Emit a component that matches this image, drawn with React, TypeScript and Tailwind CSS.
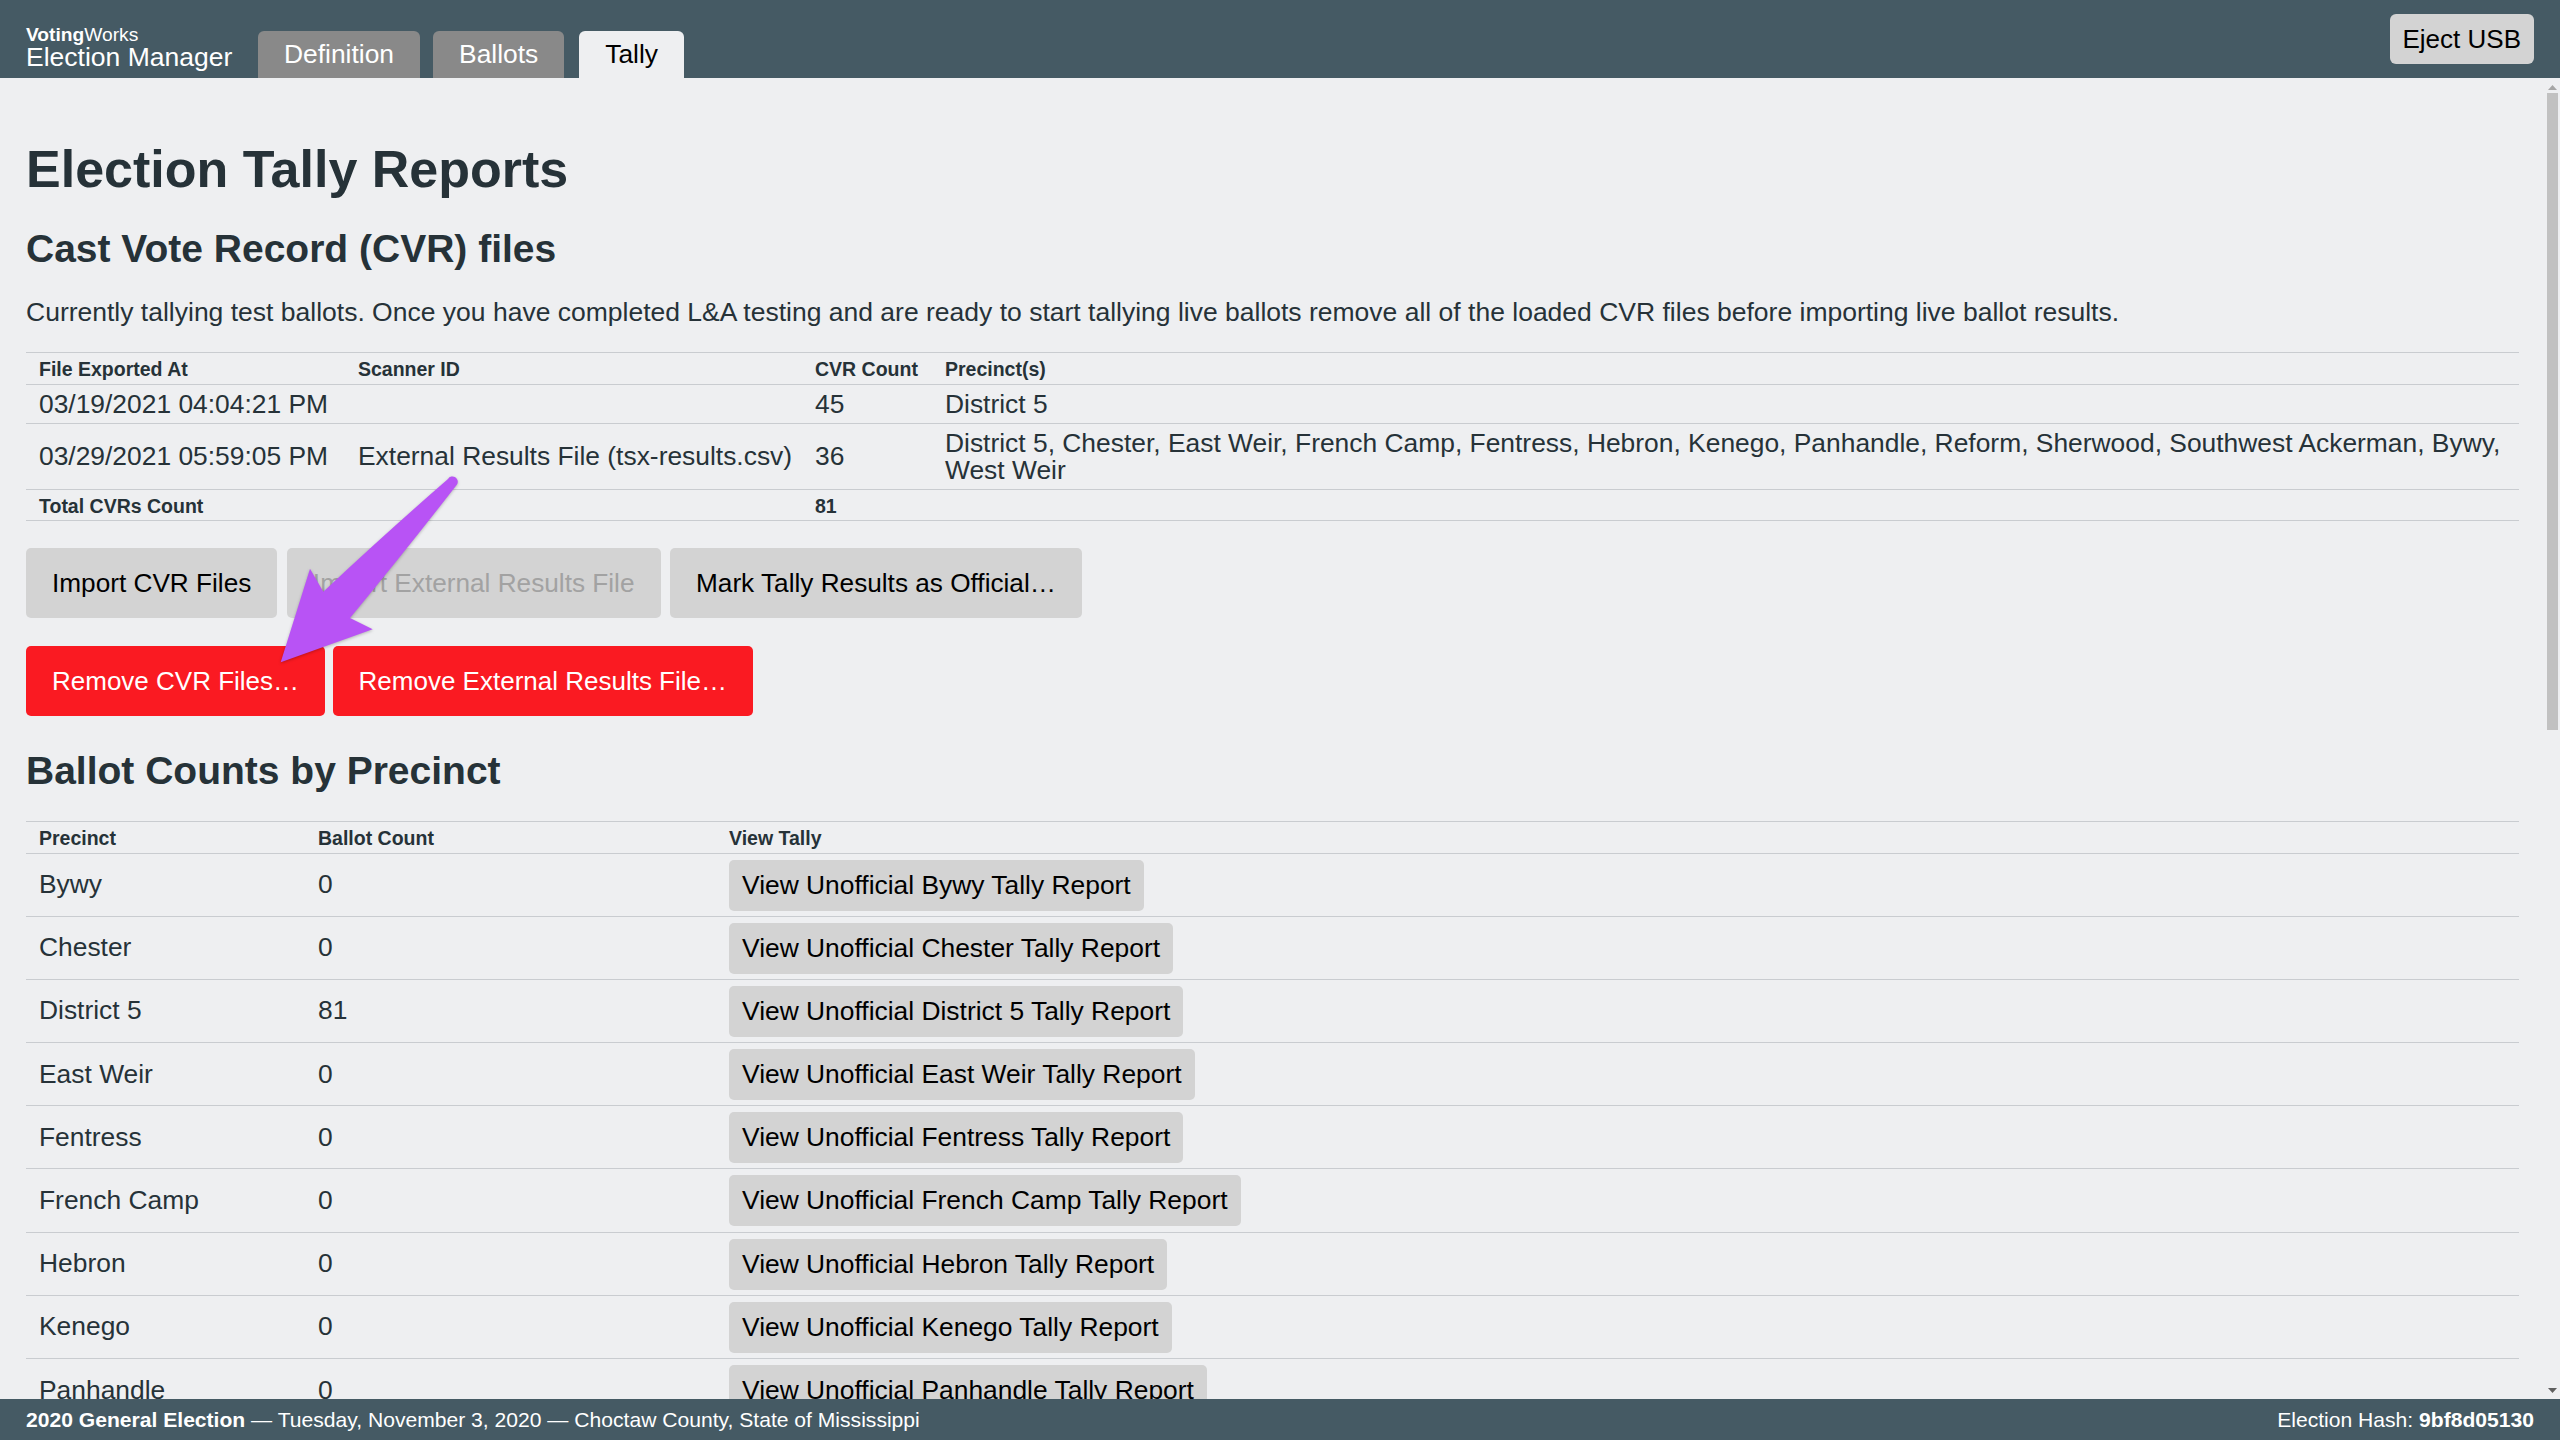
import React from 'react'

const precincts = [
    ['Bywy', 0],
    ['Chester', 0],
    ['District 5', 81],
    ['East Weir', 0],
    ['Fentress', 0],
    ['French Camp', 0],
    ['Hebron', 0],
    ['Kenego', 0],
    ['Panhandle', 0],
    ['Reform', 0],
    ['Sherwood', 0],
    ['Southwest Ackerman', 0],
    ['West Weir', 0],
] as const

const th = 'text-left font-bold text-[19.5px] leading-[20px] pt-[6px] pb-[4.5px] px-[13px] whitespace-nowrap'
const td = 'text-[26.4px] leading-[27px] pt-[6px] pb-[5px] px-[13px]'
const grayBtn = 'bg-[#d3d3d3] text-black text-[26.2px] leading-[31px] px-[26px] py-[19.5px] rounded-[5px]'
const redBtn = 'bg-[#fa1a22] text-white text-[26px] leading-[31px] px-[26px] py-[19.5px] rounded-[5px]'
const smallBtn = 'bg-[#d3d3d3] text-black text-[26.4px] leading-[31px] px-[13px] py-[10px] rounded-[5px] whitespace-nowrap'

function Arrow() {
    return (
        <svg
            className="absolute left-[270px] top-[470px] w-[200px] h-[200px] pointer-events-none drop-shadow-[0_1px_1.5px_rgba(0,0,0,0.25)]"
            viewBox="0 0 200 200"
        >
            <path
                d="M178 9 A5.2 5.2 0 0 1 187 14.5 Q133 84 80 148 L102.7 159.3 L10.7 192.3 L40 98.7 L53.3 121.7 Q117 62 178 9 Z"
                fill="#b853f5"
            />
        </svg>
    )
}

function ScrollBar() {
    return (
        <div className="w-[15px] shrink-0 flex flex-col items-center bg-[#eeeff1]">
            <svg className="mt-[7px] w-[9px] h-[5px]" viewBox="0 0 9 5">
                <polygon points="4.5,0 9,5 0,5" fill="#a6a6a6" />
            </svg>
            <div className="mt-[3px] w-[11px] h-[637px] bg-[#c1c1c1]" />
            <div className="flex-1" />
            <svg className="mb-[6px] w-[9px] h-[5px]" viewBox="0 0 9 5">
                <polygon points="0,0 9,0 4.5,5" fill="#5f5f5f" />
            </svg>
        </div>
    )
}

export default function App() {
    return (
        <div className="relative h-screen w-full flex flex-col bg-[#eeeff1] text-[#263238] font-['Liberation_Sans',Arial,sans-serif]">
            <header className="h-[78px] shrink-0 bg-[#455a64] flex px-[26px]">
                <div className="w-[232px] self-end pb-[8px] text-white">
                    <div className="text-[19.2px] leading-[19px]">
                        <span className="font-bold">Voting</span>Works
                    </div>
                    <div className="text-[26.5px] leading-[26px]">Election Manager</div>
                </div>
                <nav className="self-end flex gap-[13px]">
                    <span className="h-[47px] flex items-center px-[26px] rounded-t-[6px] bg-[#898989] text-white text-[26.4px]">
                        Definition
                    </span>
                    <span className="h-[47px] flex items-center px-[26px] rounded-t-[6px] bg-[#898989] text-white text-[26.4px]">
                        Ballots
                    </span>
                    <span className="ml-[2px] h-[47px] flex items-center px-[26px] rounded-t-[6px] bg-[#eeeff1] text-black text-[26.4px]">
                        Tally
                    </span>
                </nav>
                <div className="flex-1" />
                <button className="self-center bg-[#d3d3d3] text-black text-[26px] leading-[31px] px-[13px] py-[9.5px] rounded-[6px]">
                    Eject USB
                </button>
            </header>

            <div className="flex-1 min-h-0 flex">
                <main className="flex-1 min-w-0 overflow-y-hidden px-[26px] pt-[60px] pb-[120px]">
                    <h1 className="text-[52px] leading-[62px] font-bold">Election Tally Reports</h1>
                    <h2 className="mt-[25px] text-[39px] leading-[47px] font-bold">Cast Vote Record (CVR) files</h2>
                    <p className="mt-[27px] text-[26.5px] leading-[27px]">
                        Currently tallying test ballots. Once you have completed L&amp;A testing and are ready to start
                        tallying live ballots remove all of the loaded CVR files before importing live ballot results.
                    </p>

                    <table className="mt-[26px] w-full table-fixed border-collapse">
                        <colgroup>
                            <col className="w-[319px]" />
                            <col className="w-[457px]" />
                            <col className="w-[130px]" />
                            <col />
                        </colgroup>
                        <thead>
                            <tr className="border-y border-[#c9ccd0]">
                                <th className={th}>File Exported At</th>
                                <th className={th}>Scanner ID</th>
                                <th className={th}>CVR Count</th>
                                <th className={th}>Precinct(s)</th>
                            </tr>
                        </thead>
                        <tbody>
                            <tr className="border-b border-[#c9ccd0]">
                                <td className={td}>03/19/2021 04:04:21 PM</td>
                                <td className={td}></td>
                                <td className={td}>45</td>
                                <td className={td}>District 5</td>
                            </tr>
                            <tr className="border-b border-[#c9ccd0]">
                                <td className={td}>03/29/2021 05:59:05 PM</td>
                                <td className={td + ' whitespace-nowrap'}>External Results File (tsx-results.csv)</td>
                                <td className={td}>36</td>
                                <td className={td}>
                                    District 5, Chester, East Weir, French Camp, Fentress, Hebron, Kenego, Panhandle, Reform,
                                    Sherwood, Southwest Ackerman, Bywy, West Weir
                                </td>
                            </tr>
                            <tr className="border-b border-[#c9ccd0]">
                                <td className={th}>Total CVRs Count</td>
                                <td className={th}></td>
                                <td className={th}>81</td>
                                <td className={th}></td>
                            </tr>
                        </tbody>
                    </table>

                    <div className="mt-[27px] flex flex-col gap-[28px]">
                        <div className="flex gap-[9.5px]">
                            <button className={grayBtn}>Import CVR Files</button>
                            <button className={grayBtn + ' !text-[#a2a2a2]'} disabled>
                                Import External Results File
                            </button>
                            <button className={grayBtn}>Mark Tally Results as Official…</button>
                        </div>
                        <div className="flex gap-[7.5px]">
                            <button className={redBtn}>Remove CVR Files…</button>
                            <button className={redBtn}>Remove External Results File…</button>
                        </div>
                    </div>

                    <h2 className="mt-[31px] text-[39px] leading-[47px] font-bold">Ballot Counts by Precinct</h2>
                    <table className="mt-[27px] w-full table-fixed border-collapse">
                        <colgroup>
                            <col className="w-[279px]" />
                            <col className="w-[411px]" />
                            <col />
                        </colgroup>
                        <thead>
                            <tr className="border-y border-[#c9ccd0]">
                                <th className={th}>Precinct</th>
                                <th className={th}>Ballot Count</th>
                                <th className={th}>View Tally</th>
                            </tr>
                        </thead>
                        <tbody>
                            {precincts.map(([name, count]) => (
                                <tr key={name} className="border-b border-[#c9ccd0]">
                                    <td className="text-[26.4px] leading-[27px] px-[13px]">{name}</td>
                                    <td className="text-[26.4px] leading-[27px] px-[13px]">{count}</td>
                                    <td className="px-[13px] pt-[6px] pb-[5.2px]">
                                        <button className={smallBtn}>View Unofficial {name} Tally Report</button>
                                    </td>
                                </tr>
                            ))}
                        </tbody>
                    </table>

                    <h2 className="mt-[30px] text-[39px] leading-[47px] font-bold">Ballot Counts by Scanner</h2>
                    <table className="mt-[28px] w-full table-fixed border-collapse">
                        <colgroup>
                            <col className="w-[279px]" />
                            <col className="w-[411px]" />
                            <col />
                        </colgroup>
                        <thead>
                            <tr className="border-y border-[#c9ccd0]">
                                <th className={th}>Scanner ID</th>
                                <th className={th}>Ballot Count</th>
                                <th className={th}>View Tally</th>
                            </tr>
                        </thead>
                        <tbody>
                            <tr className="border-b border-[#c9ccd0]">
                                <td className={td}>External Results</td>
                                <td className={td}>36</td>
                                <td className="px-[13px] pt-[6px] pb-[5px]">
                                    <button className={smallBtn}>View Unofficial External Results Tally Report</button>
                                </td>
                            </tr>
                            <tr className="border-b border-[#c9ccd0]">
                                <td className={td}>Unknown</td>
                                <td className={td}>45</td>
                                <td className="px-[13px] pt-[6px] pb-[5px]">
                                    <button className={smallBtn}>View Unofficial Unknown Scanner Tally Report</button>
                                </td>
                            </tr>
                        </tbody>
                    </table>

                    <h2 className="mt-[30px] text-[39px] leading-[47px] font-bold">Other Reports</h2>
                    <div className="mt-[28px] flex gap-[9.5px]">
                        <button className={grayBtn}>View Unofficial Full Election Tally Report</button>
                        <button className={grayBtn}>Save Results File</button>
                    </div>
                </main>
                <ScrollBar />
            </div>

            <footer className="h-[41px] shrink-0 bg-[#455a64] text-white text-[21.1px] flex items-center justify-between px-[26px]">
                <div>
                    <span className="font-bold">2020 General Election</span> — Tuesday, November 3, 2020 — Choctaw County,
                    State of Mississippi
                </div>
                <div>
                    Election Hash: <span className="font-bold">9bf8d05130</span>
                </div>
            </footer>

            <Arrow />
        </div>
    )
}
